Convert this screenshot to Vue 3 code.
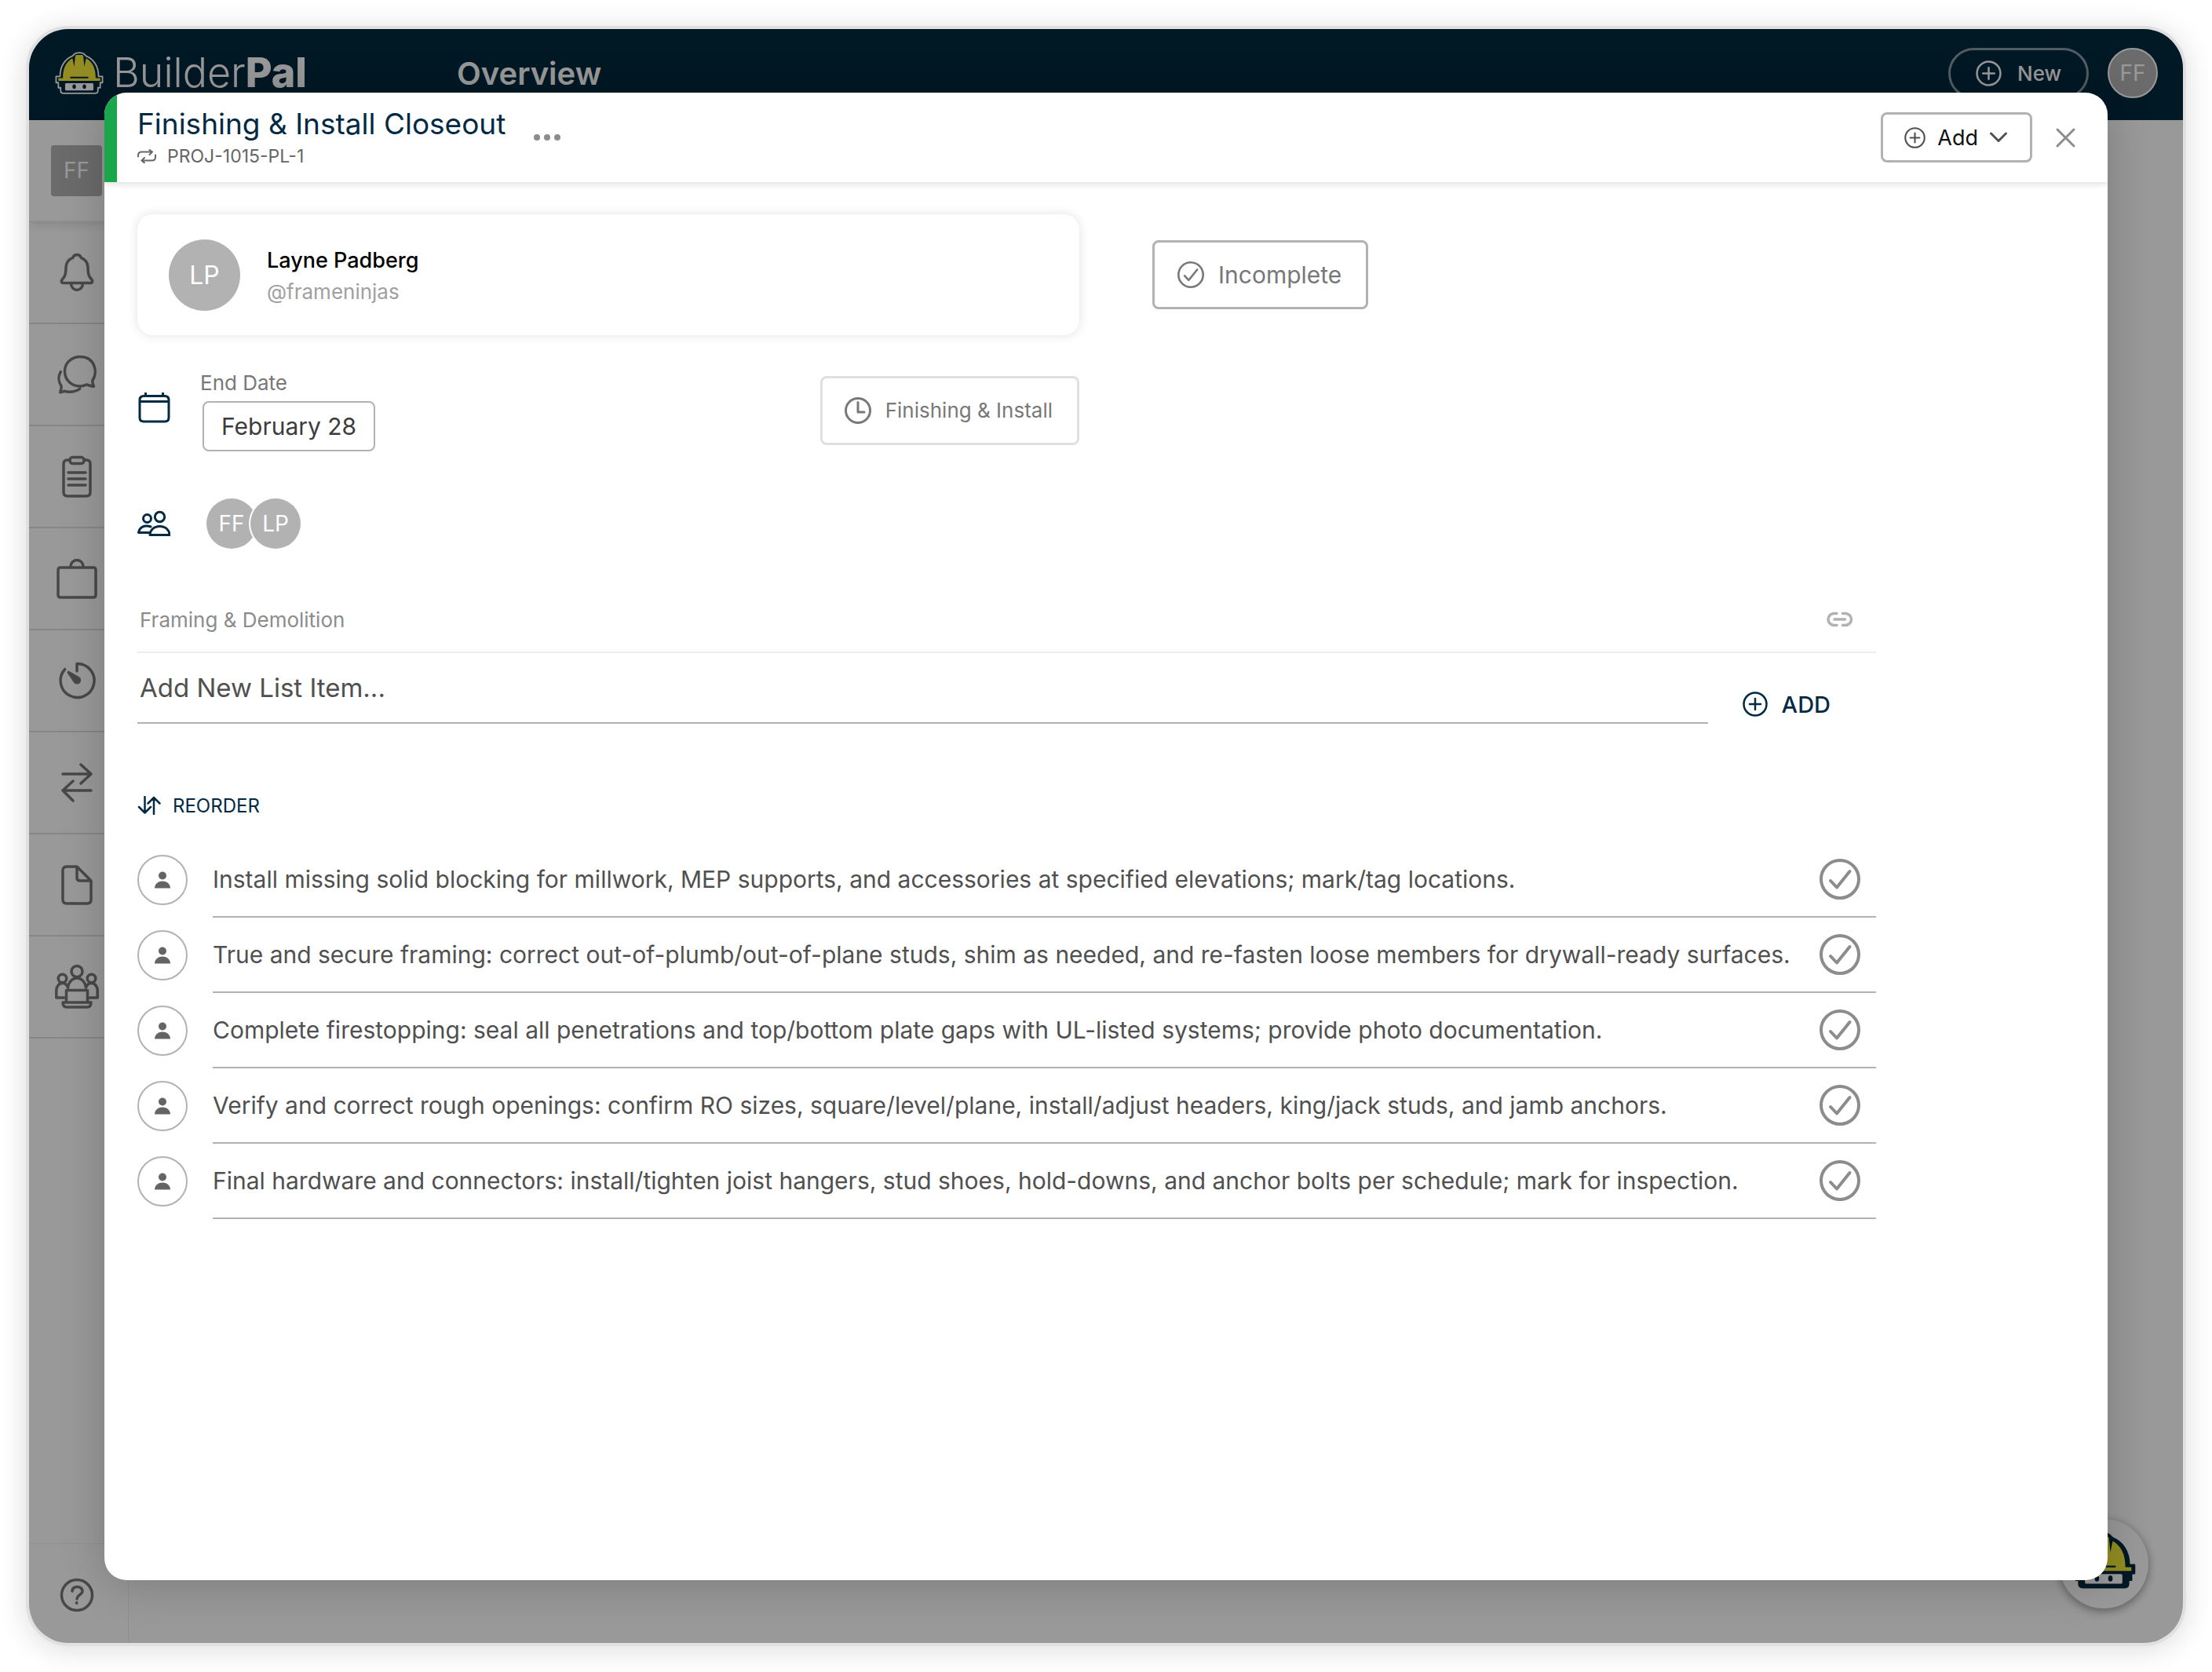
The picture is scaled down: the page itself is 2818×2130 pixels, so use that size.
<script setup>
import { ref } from 'vue';

const navItems = ['bell', 'chat', 'clipboard', 'briefcase', 'timer', 'transfer', 'file', 'team'];

const newItem = ref('');
const isComplete = ref(false);

const items = ref([
  { id: 1, done: false, text: 'Install missing solid blocking for millwork, MEP supports, and accessories at specified elevations; mark/tag locations.' },
  { id: 2, done: false, text: 'True and secure framing: correct out-of-plumb/out-of-plane studs, shim as needed, and re-fasten loose members for drywall-ready surfaces.' },
  { id: 3, done: false, text: 'Complete firestopping: seal all penetrations and top/bottom plate gaps with UL-listed systems; provide photo documentation.' },
  { id: 4, done: false, text: 'Verify and correct rough openings: confirm RO sizes, square/level/plane, install/adjust headers, king/jack studs, and jamb anchors.' },
  { id: 5, done: false, text: 'Final hardware and connectors: install/tighten joist hangers, stud shoes, hold-downs, and anchor bolts per schedule; mark for inspection.' },
]);

function addItem() {
  const text = newItem.value.trim();
  if (!text) return;
  items.value.push({ id: Date.now(), done: false, text });
  newItem.value = '';
}
</script>

<template>
  <!-- shared shapes -->
  <svg class="sprite" aria-hidden="true">
    <symbol id="helmet" viewBox="-8 -2 86 76">
      <path class="helmet-shell" d="M26 3Q28 0 35 0T44 3L47 6C60 11 69 24 69 42H76V53H72V62H68V67Q68 72 63 72H7Q2 72 2 67V62H-2V53H-6V42H1C1 24 10 11 23 6Z" />
      <path class="helmet-dome" d="M6 45C6 27 12 16 23 10L26 25L28 6Q28 4 31 4H39Q42 4 42 6L44 25L47 10C58 16 64 27 64 45H72V50H-2V45Z" />
      <path class="helmet-line" d="M20 44H50" />
      <rect class="helmet-face" x="10" y="54" width="50" height="13" rx="2" />
      <ellipse class="helmet-eye" cx="26" cy="60" rx="3" ry="4" />
      <ellipse class="helmet-eye" cx="44" cy="60" rx="3" ry="4" />
    </symbol>
    <symbol id="plus-circle" viewBox="0 0 32 32">
      <circle cx="16" cy="16" r="14.5" />
      <path d="M16 9v14M9 16h14" />
    </symbol>
    <symbol id="check-circle" viewBox="0 0 52 52">
      <circle cx="26" cy="26" r="24" />
      <path d="M14 28l8 8.5L38.5 16" />
    </symbol>
  </svg>

  <div class="page">
    <div class="window">
      <header class="topbar">
        <a class="logo" href="#">
          <svg class="logo-mark"><use href="#helmet" /></svg>
          <span class="logo-text">Builder<b>Pal</b></span>
        </a>
        <h1 class="page-title">Overview</h1>
        <button class="new-btn" type="button">
          <svg class="new-icon"><use href="#plus-circle" /></svg>
          New
        </button>
        <span class="user-avatar">FF</span>
      </header>

      <div class="workspace">
        <nav class="sidebar">
          <div class="side-cell side-user"><span class="side-badge">FF</span></div>
          <a v-for="item in navItems" :key="item" class="side-cell" href="#" :aria-label="item">
            <svg class="side-icon" viewBox="0 0 60 60">
              <path v-if="item === 'bell'" d="M30 7.5c-3 0-4.5 1.5-5.2 3.8-5.5 2-8.6 6.5-8.8 12.5-.2 8-.8 11-4.5 15-2 2.2-1.2 4.7.8 4.7h35.4c2 0 2.8-2.5.8-4.7-3.7-4-4.3-7-4.5-15-.2-6-3.3-10.5-8.8-12.5-.7-2.3-2.2-3.8-5.2-3.8zM22.5 44c0 5 3.5 8.5 7.5 8.5s7.5-3.5 7.5-8.5" />
              <path v-else-if="item === 'chat'" d="M50 37.5C57 27 53 7.5 34 7.5c-11 0-19.5 8-19.5 18.5C14.5 38 24 45 34 45c3 0 6-1 8-2 3 .5 6 2 9.5 2.2-1-2.7-2.5-4.2-1.5-7.7zM9.3 26.6c-3.5 6-2.8 13 .7 17.9.8 3-.8 5.5-1.3 8.2 2-.2 3.5-1 5-1.4 7 1.7 14 1.2 20-2.9" />
              <template v-else-if="item === 'clipboard'">
                <path d="M21 9h-3q-5 0-5 5v36q0 5 5 5h24q5 0 5-5V14q0-5-5-5h-3" />
                <rect x="21" y="5.5" width="18" height="8" rx="3.5" />
                <path d="M19 25h22M19 33h22M19 41h22" />
              </template>
              <path v-else-if="item === 'briefcase'" d="M9 16h42q3 0 3 3v32q0 3-3 3H9q-3 0-3-3V19q0-3 3-3zM22 15c0-5 3.5-8.5 8-8.5s8 3.5 8 8.5" />
              <template v-else-if="item === 'timer'">
                <path d="M30 18V8.500A21.5 21.5 0 1 1 14.7 15.5" />
                <path class="solid" d="M19.3 19.5l13 7.5a3.3 3.3 0 1 1-4.5 5z" />
              </template>
              <path v-else-if="item === 'transfer'" d="M12 19h36M35 7l13 12-13 12M48 40H12M25 28L12 40l13 13" />
              <path v-else-if="item === 'file'" d="M30 7H17q-5 0-5 5v37q0 5 5 5h26q5 0 5-5V25zV21q0 4 4 4h14" />
              <template v-else>
                <circle cx="30" cy="10.5" r="7" />
                <circle cx="11.5" cy="19.5" r="5.3" />
                <circle cx="48.5" cy="19.5" r="5.3" />
                <path d="M18.5 31c1-7 5.5-12 11.5-12s10.5 5 11.5 12M13.5 44H3.8V35c0-5.5 3.5-9.5 7.7-9.5 3.5 0 6 2.5 7 5.5M46.5 44h9.7V35c0-5.5-3.5-9.5-7.7-9.5-3.5 0-6 2.5-7 5.5M16.5 50V34.5h27V50M12 50h36q0 6-5 6H17q-5 0-5-6z" />
              </template>
            </svg>
          </a>
          <a class="side-cell side-help" href="#" aria-label="Help">
            <svg class="side-icon" viewBox="0 0 60 60">
              <circle cx="30" cy="32" r="19.5" />
              <path d="M24 27q.5-5.5 6.5-5.5t6.5 5.5c0 4.5-7 5-7 10" />
              <circle class="solid dot" cx="29.7" cy="42" r="2" />
            </svg>
          </a>
        </nav>
      </div>

      <button class="bot-btn" type="button" aria-label="Assistant">
        <svg class="bot-mark"><use href="#helmet" /></svg>
      </button>

      <div class="backdrop"></div>

      <section class="modal" role="dialog" aria-labelledby="modal-title">
        <header class="modal-header">
          <div class="heading">
            <h2 id="modal-title" class="modal-title">Finishing &amp; Install Closeout</h2>
            <p class="modal-code">
              <svg class="code-icon" viewBox="0 0 24 18">
                <path d="M1 9.5V8q0-4.5 4.5-4.5H19M15.5 1L19 3.5 15.5 7M23 7.5V10q0 4.5-4.5 4.5H6M9 11l-3.5 3.5L9 17.5" />
              </svg>
              PROJ-1015-PL-1
            </p>
          </div>
          <button class="icon-btn" type="button" aria-label="More">
            <svg class="more-icon" viewBox="0 0 34 10">
              <circle cx="4" cy="5" r="4" /><circle cx="17" cy="5" r="4" /><circle cx="30" cy="5" r="4" />
            </svg>
          </button>
          <div class="header-actions">
            <button class="box-btn add-btn" type="button">
              <svg class="add-icon"><use href="#plus-circle" /></svg>
              Add
              <svg class="chevron" viewBox="0 0 22 14"><path d="M1.5 2L11 11.5 20.5 2" /></svg>
            </button>
            <button class="icon-btn" type="button" aria-label="Close">
              <svg class="close-icon" viewBox="0 0 36 36"><path d="M8 8l21 21M29 8L8 29" /></svg>
            </button>
          </div>
        </header>

        <div class="modal-body">
          <div class="row">
            <div class="person-card">
              <span class="avatar avatar-lg">LP</span>
              <div class="person">
                <p class="person-name">Layne Padberg</p>
                <p class="person-handle">@frameninjas</p>
              </div>
            </div>
            <button class="box-btn status-btn" type="button" :aria-pressed="isComplete" @click="isComplete = !isComplete">
              <svg class="status-icon"><use href="#check-circle" /></svg>
              {{ isComplete ? 'Complete' : 'Incomplete' }}
            </button>
          </div>

          <div class="row date-row">
            <svg class="row-icon" viewBox="0 0 42 40">
              <path d="M8 4.5h27q5 0 5 5V32q0 5-5 5H8q-5 0-5-5V9.500q0-5 5-5zM3 11.5h37M10.5 4.5V1M32.5 4.5V1" />
            </svg>
            <div class="date-field">
              <label class="date-label" for="end-date">End Date</label>
              <button id="end-date" class="box-btn date-btn" type="button">February 28</button>
            </div>
            <button class="box-btn phase-btn" type="button">
              <svg class="status-icon" viewBox="0 0 34 34"><circle cx="17" cy="17" r="15.5" /><path d="M17 6.5V19h8" /></svg>
              Finishing &amp; Install
            </button>
          </div>

          <div class="row people-row">
            <svg class="row-icon" viewBox="0 0 42 40">
              <circle cx="28.5" cy="11.5" r="6.2" />
              <circle cx="12.5" cy="13.5" r="5" />
              <path d="M16 34.5c0-6 5-11 12.5-11S41 28.5 41 34.5zM17 24c-8-3-14.5 1-15.5 7.5H14" />
            </svg>
            <div class="people">
              <span class="avatar">FF</span>
              <span class="avatar">LP</span>
            </div>
          </div>

          <div class="section-head">
            <h3 class="section-title">Framing &amp; Demolition</h3>
            <button class="icon-btn" type="button" aria-label="Copy link">
              <svg class="link-icon" viewBox="0 0 34 20">
                <path d="M13 2.5H9.500a7.5 7.5 0 0 0 0 15H13M20.5 2.5H24a7.5 7.5 0 0 1 0 15h-3.5M10 10h13.5" />
              </svg>
            </button>
          </div>

          <form class="add-form" @submit.prevent="addItem">
            <input v-model="newItem" class="add-input" type="text" placeholder="Add New List Item..." aria-label="Add New List Item" />
            <button class="text-btn add-item" type="submit">
              <svg class="add-item-icon"><use href="#plus-circle" /></svg>
              ADD
            </button>
          </form>

          <button class="text-btn reorder" type="button">
            <svg class="reorder-icon" viewBox="0 0 28 24"><path d="M8.5 1v20M1 14l7.5 7.5L16 14M20 23V2M12.5 9.5L20 2l7.5 7.5" /></svg>
            REORDER
          </button>

          <ul class="list">
            <li v-for="item in items" :key="item.id" class="item">
              <button class="assign" type="button" aria-label="Assign">
                <svg class="assign-icon" viewBox="0 0 20 22"><circle cx="10" cy="5.5" r="5" /><path d="M0 21.5c0-5 4-9 10-9s10 4 10 9z" /></svg>
              </button>
              <label class="item-main">
                <span>{{ item.text }}</span>
                <input v-model="item.done" class="item-input" type="checkbox" />
                <svg class="item-check"><use href="#check-circle" /></svg>
              </label>
            </li>
          </ul>
        </div>
      </section>
    </div>
  </div>
</template>

<style>
body {
  background: #fff;
}
</style>

<style scoped>
.page {
  --navy: #032a44;
  --line: #b2b2b2;
  box-sizing: border-box;
  min-height: 100vh;
  padding: 33px;
  display: flex;
  font-family: Inter, "Liberation Sans", sans-serif;
  font-size: 30px;
  color: #505050;
}
.page *,
.page *::before {
  box-sizing: border-box;
}
h1,
h2,
h3,
p,
ul {
  margin: 0;
  padding: 0;
}
button {
  font: inherit;
  color: inherit;
  background: none;
  border: 0;
  padding: 0;
  cursor: pointer;
}
svg {
  display: block;
  flex-shrink: 0;
  fill: none;
  stroke: currentColor;
  stroke-linecap: round;
  stroke-linejoin: round;
}
.sprite {
  position: absolute;
  width: 0;
  height: 0;
}

/* helmet mark, recoloured through variables */
.helmet-shell {
  fill: #03283e;
  stroke: var(--helmet-edge);
  stroke-width: 2.5;
}
.helmet-dome {
  fill: #f3e939;
  stroke: none;
}
.helmet-line {
  stroke: #03283e;
  stroke-width: 2.5;
}
.helmet-face {
  fill: #fff;
  stroke: none;
}
.helmet-eye {
  fill: #03283e;
  stroke: none;
}

.window {
  position: relative;
  flex: 1;
  display: flex;
  flex-direction: column;
  border: 4px solid #e0e0e0;
  border-radius: 54px;
  overflow: hidden;
  background: #fff;
  box-shadow: 0 4px 36px rgba(0, 0, 0, 0.14);
}

.topbar {
  display: flex;
  align-items: center;
  height: 116px;
  padding: 0 32px 4px 33px;
  background: #03283e;
  color: #fff;
}
.logo {
  display: flex;
  align-items: center;
  gap: 12px;
  flex: 0 0 512px;
  color: inherit;
  text-decoration: none;
}
.logo-mark {
  width: 62px;
  height: 56px;
  --helmet-edge: #fff;
}
.logo-text {
  font-size: 52px;
  line-height: 60px;
  font-weight: 300;
}
.logo-text b {
  font-weight: 800;
}
.page-title {
  flex: 1;
  font-size: 40px;
  font-weight: 600;
}
.new-btn {
  display: flex;
  align-items: center;
  justify-content: center;
  gap: 20px;
  width: 179px;
  height: 65px;
  margin-right: 24px;
  border: 3px solid #8a99a5;
  border-radius: 33px;
  font-size: 26px;
  font-weight: 500;
}
.new-icon {
  width: 33px;
  height: 33px;
  stroke-width: 2.5;
}
.user-avatar {
  display: flex;
  align-items: center;
  justify-content: center;
  width: 64px;
  height: 64px;
  border: 2px solid #fff;
  border-radius: 50%;
  background: #b2b2b2;
  font-size: 28px;
}

.workspace {
  flex: 1;
  display: flex;
}
.sidebar {
  display: flex;
  flex-direction: column;
  width: 127px;
  border-right: 1px solid #eee;
}
.side-cell {
  display: flex;
  align-items: center;
  justify-content: center;
  height: 130px;
  padding-right: 5px;
  border-bottom: 2px solid #e0e0e0;
  color: #787878;
}
.side-user {
  border-bottom-color: #eee;
  box-shadow: 0 2px 12px rgba(0, 0, 0, 0.14);
}
.side-badge {
  display: flex;
  align-items: center;
  justify-content: center;
  width: 65px;
  height: 65px;
  border-radius: 4px;
  background: #b2b2b2;
  color: #fff;
  font-size: 28px;
}
.side-icon {
  width: 60px;
  height: 60px;
  stroke-width: 3.5;
}
.solid {
  fill: currentColor;
}
.dot {
  stroke: none;
}
.side-help {
  margin-top: auto;
  height: 127px;
  border-top: 1px solid #eee;
  border-bottom: 0;
}

.bot-btn {
  position: absolute;
  right: 44px;
  bottom: 44px;
  display: flex;
  align-items: center;
  justify-content: center;
  width: 114px;
  height: 114px;
  padding-bottom: 8px;
  border-radius: 50%;
  background: #fff;
  box-shadow: 0 3px 12px rgba(0, 0, 0, 0.4);
}
.bot-mark {
  width: 82px;
  height: 74px;
  --helmet-edge: #03283e;
}
.backdrop {
  position: absolute;
  inset: 0;
  background: rgba(0, 0, 0, 0.4);
}

.modal {
  position: absolute;
  inset: 81px 96px 80px;
  border-radius: 28px;
  overflow: hidden;
  background: #fff;
  box-shadow: 0 4px 60px rgba(0, 0, 0, 0.2);
}
.modal-header {
  display: flex;
  align-items: center;
  height: 114px;
  padding: 0 36px 0 26px;
  border-left: 16px solid #19a74e;
  box-shadow: 0 2px 8px rgba(0, 0, 0, 0.14);
}
.heading {
  padding-top: 6px;
}
.modal-title {
  font-size: 37px;
  line-height: 42px;
  font-weight: 400;
  color: var(--navy);
}
.modal-code {
  display: flex;
  align-items: center;
  gap: 14px;
  font-size: 23px;
  line-height: 40px;
  color: #666;
}
.code-icon {
  width: 24px;
  height: 18px;
  stroke-width: 2;
}
.icon-btn {
  color: #8c8c8c;
}
.more-icon {
  width: 34px;
  height: 10px;
  margin-left: 36px;
  fill: currentColor;
  stroke: none;
}
.header-actions {
  display: flex;
  align-items: center;
  gap: 24px;
  margin-left: auto;
}
.close-icon {
  width: 36px;
  height: 36px;
  stroke-width: 3;
}

.box-btn {
  display: flex;
  align-items: center;
  border: 3px solid var(--line);
  border-radius: 8px;
  background: #fff;
}
.add-btn {
  gap: 15px;
  height: 64px;
  padding: 0 29px 0 27px;
  font-size: 27px;
  color: #111;
}
.add-icon {
  width: 27px;
  height: 27px;
  stroke: #505050;
  stroke-width: 2.5;
}
.chevron {
  width: 22px;
  height: 14px;
  stroke: #505050;
  stroke-width: 3;
}

.modal-body {
  padding: 41px 295px 41px 42px;
}
.row {
  display: flex;
  align-items: center;
}
.person-card {
  display: flex;
  align-items: center;
  gap: 34px;
  width: 1200px;
  height: 154px;
  padding-left: 40px;
  border-radius: 20px;
  box-shadow: 0 0 14px rgba(0, 0, 0, 0.12);
}
.avatar {
  display: flex;
  align-items: center;
  justify-content: center;
  width: 64px;
  height: 64px;
  border-radius: 50%;
  background: var(--line);
  color: #fff;
  font-size: 28px;
}
.avatar-lg {
  width: 91px;
  height: 91px;
  font-size: 32px;
}
.person {
  padding-top: 3px;
}
.person-name {
  font-size: 27px;
  line-height: 40px;
  font-weight: 500;
  color: #000;
}
.person-handle {
  font-size: 26px;
  line-height: 40px;
  color: #a0a0a0;
}
.status-btn {
  gap: 18px;
  height: 88px;
  margin-left: 93px;
  padding: 0 31px 0 29px;
  color: #787878;
}
.status-icon {
  width: 34px;
  height: 34px;
  stroke-width: 3;
}
.status-btn .status-icon {
  stroke-width: 4;
}
.date-row {
  width: 1200px;
  margin-top: 43px;
}
.row-icon {
  width: 42px;
  height: 40px;
  color: var(--navy);
  stroke-width: 3;
}
.date-row .row-icon {
  margin-bottom: 6px;
}
.date-field {
  margin-left: 38px;
}
.date-label {
  display: block;
  font-size: 26px;
  line-height: 36px;
  color: #787878;
}
.date-btn {
  height: 64px;
  margin: 5px 0 0 3px;
  padding: 0 22px;
  border-width: 2px;
  font-size: 30px;
  color: #3c3c3c;
}
.phase-btn {
  gap: 18px;
  height: 88px;
  margin-left: auto;
  padding: 0 31px 0 28px;
  border-color: #e0e0e0;
  font-size: 26px;
  color: #787878;
}
.people-row {
  margin-top: 60px;
}
.people {
  display: flex;
  margin-left: 46px;
}
.people .avatar + .avatar {
  margin-left: -8px;
  box-shadow: 0 0 0 2px #fff;
}

.section-head {
  display: flex;
  align-items: center;
  justify-content: space-between;
  height: 84px;
  margin-top: 49px;
  padding: 0 29px 0 3px;
  border-bottom: 2px solid #eee;
}
.section-title {
  font-size: 26px;
  font-weight: 400;
  color: #8c8c8c;
}
.link-icon {
  width: 34px;
  height: 20px;
  color: var(--line);
  stroke-width: 3.5;
}
.add-form {
  display: flex;
  align-items: flex-end;
  padding-right: 58px;
}
.add-input {
  flex: 1;
  height: 90px;
  padding: 0 3px;
  border: 0;
  border-bottom: 2px solid var(--line);
  outline: none;
  background: none;
  font: inherit;
  font-size: 33px;
  color: #505050;
}
.add-input::placeholder {
  color: #505050;
  opacity: 1;
}
.text-btn {
  display: flex;
  align-items: center;
  color: var(--navy);
  font-weight: 500;
}
.add-item {
  gap: 18px;
  height: 50px;
  margin-left: 44px;
  font-size: 29px;
}
.add-item-icon {
  width: 32px;
  height: 32px;
  stroke-width: 2.5;
}
.reorder {
  gap: 15px;
  height: 40px;
  margin-top: 84px;
  font-size: 24px;
  font-weight: 400;
}
.reorder-icon {
  width: 30px;
  height: 24px;
  stroke-width: 2.5;
}

.list {
  margin-top: 27px;
  list-style: none;
}
.item {
  display: flex;
  align-items: center;
  gap: 32px;
}
.assign {
  display: flex;
  align-items: center;
  justify-content: center;
  width: 64px;
  height: 64px;
  border: 2px solid var(--line);
  border-radius: 50%;
}
.assign-icon {
  width: 20px;
  height: 22px;
  fill: #646464;
  stroke: none;
}
.item-main {
  position: relative;
  flex: 1;
  display: flex;
  align-items: center;
  justify-content: space-between;
  min-height: 96px;
  padding-right: 20px;
  border-bottom: 2px solid var(--line);
  cursor: pointer;
}
.item-input {
  position: absolute;
  right: 20px;
  width: 52px;
  height: 52px;
  margin: 0;
  opacity: 0;
}
.item-check {
  width: 52px;
  height: 52px;
  color: #8c8c8c;
  stroke-width: 4;
}
.item-input:checked + .item-check {
  color: #19a74e;
}
</style>
